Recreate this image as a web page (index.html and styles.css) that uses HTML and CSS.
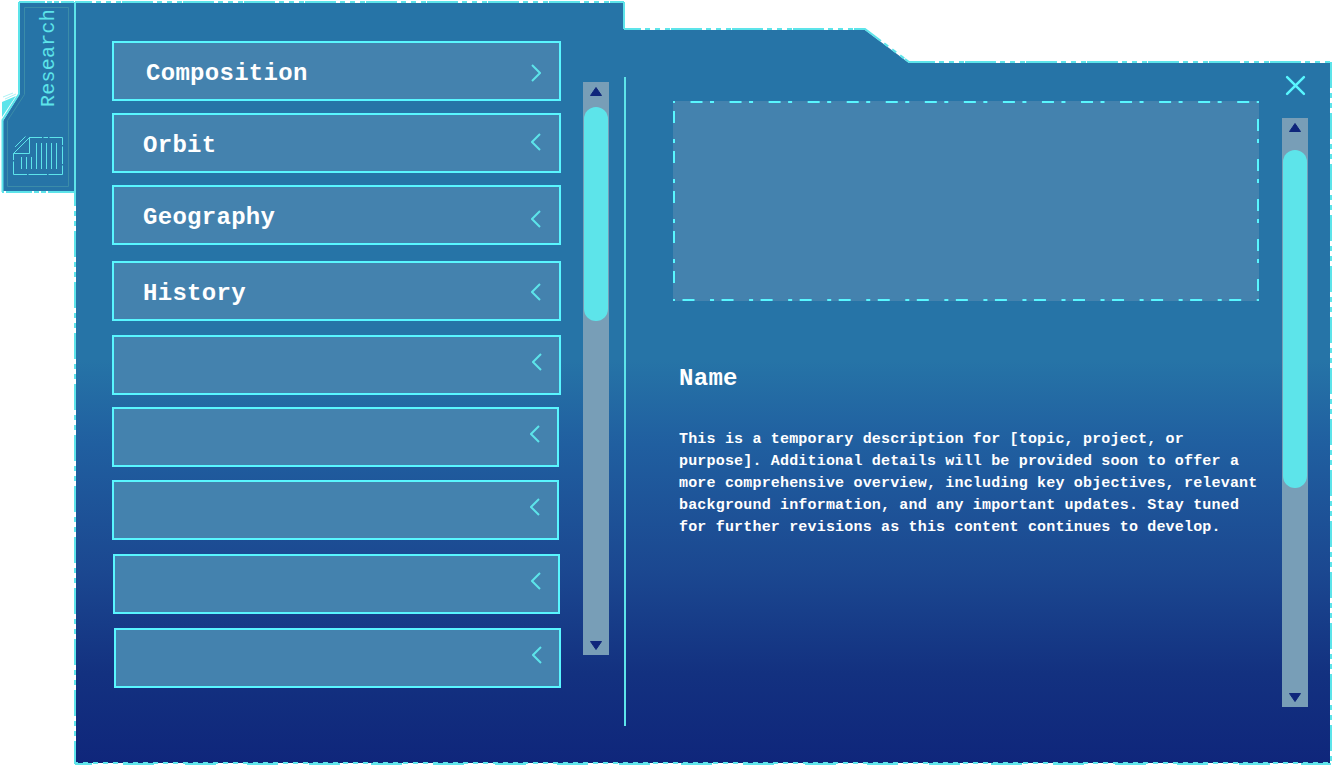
FILE: index.html
```html
<!DOCTYPE html>
<html lang="en">
<head>
<meta charset="utf-8">
<title>Research</title>
<link rel="stylesheet" href="styles.css">
</head>
<body>
<div class="screen">
  <svg class="frame" width="1333" height="765" viewBox="0 0 1333 765" aria-hidden="true">
    <defs>
      <linearGradient id="depth" gradientUnits="userSpaceOnUse" x1="704" y1="0" x2="704" y2="765">
        <stop offset="0" stop-color="#2674a7"/>
        <stop offset=".47" stop-color="#2674a7"/>
        <stop offset=".58" stop-color="#205fa0"/>
        <stop offset=".75" stop-color="#1b4790"/>
        <stop offset=".88" stop-color="#133180"/>
        <stop offset="1" stop-color="#0f267b"/>
      </linearGradient>
    </defs>
    <path class="edge-fill" d="M2 117V102L16 96Z"/>
    <path class="edge-light" d="M3 97L13 93M5 99L16 94"/>
    <path class="tab-shape" d="M19 3H74V191H3V121L19 95Z"/>
    <path class="tab-edge" d="M19 2V94L2.500 120V192"/>
    <path class="tab-dash" d="M19 2H74M74 192H2"/>
    <path class="tab-inner" d="M24.500 7.500H68.500V186.500H7.500V120.500L24.500 94.500Z"/>
    <path class="panel-shape" d="M76 3H624V30H865L909 63H1330V763H76Z"/>
    <path class="solid-edge" d="M75 2V192M624 2V29"/>
    <path class="panel-top" d="M75 2H624"/>
    <path class="panel-top" d="M624 29H865L909 62H1331"/>
    <path class="panel-dash" d="M1331 62V764"/>
    <path class="panel-dash" d="M75 180V764"/>
    <path class="base-long" d="M75 764H1331"/>
    <path class="base-short" d="M75 763H1331"/>
  </svg>

  <aside class="tab">
    <span class="tab-label">Research</span>
    <svg class="doc" width="52" height="41" viewBox="0 0 52 41" aria-hidden="true">
      <path d="M17 1.500H50.500V38.500H1.500V17.500L17.500 1.500V17.500H1.500M3 11L13.500 .5M9.500 21V33M14.500 21V33M19.500 21V33M24.500 7V33M29.500 7V33M34.500 7V33M39.500 7V33M44.500 7V33"/>
      <path class="doc-gap" d="M30 1.500H31.500M36 1.500H37.500M50.500 9V10.500M50.500 28V29.500M15 38.500H16.500M35 38.500H36.500M1.500 24V25.500"/>
    </svg>
  </aside>

  <nav class="topics">
    <button class="topic first"><span>Composition</span><svg class="arrow a1" viewBox="0 0 10 18"><path d="M1 1L9 9L1 17"/></svg></button>
    <button class="topic g12"><span>Orbit</span><svg class="arrow a2" viewBox="0 0 10 18"><path d="M9 1L1 9L9 17"/></svg></button>
    <button class="topic g12"><span>Geography</span><svg class="arrow a3" viewBox="0 0 10 18"><path d="M9 1L1 9L9 17"/></svg></button>
    <button class="topic g16"><span>History</span><svg class="arrow a4" viewBox="0 0 10 18"><path d="M9 1L1 9L9 17"/></svg></button>
    <button class="topic g14"><svg class="arrow a5" viewBox="0 0 10 18"><path d="M9 1L1 9L9 17"/></svg></button>
    <button class="topic g12 narrow"><svg class="arrow a6" viewBox="0 0 10 18"><path d="M9 1L1 9L9 17"/></svg></button>
    <button class="topic g13 narrow"><svg class="arrow a6" viewBox="0 0 10 18"><path d="M9 1L1 9L9 17"/></svg></button>
    <button class="topic g14 narrow in1"><svg class="arrow a6" viewBox="0 0 10 18"><path d="M9 1L1 9L9 17"/></svg></button>
    <button class="topic g14 narrow in2"><svg class="arrow a6" viewBox="0 0 10 18"><path d="M9 1L1 9L9 17"/></svg></button>
  </nav>

  <div class="scroll scroll-list">
    <svg class="cap" viewBox="0 0 12 9"><path d="M6 .5L11.500 8.500H.5Z"/></svg>
    <div class="thumb"></div>
    <svg class="cap end" viewBox="0 0 12 9"><path d="M6 8.500L11.500 .5H.5Z"/></svg>
  </div>

  <div class="divider"></div>

  <main class="detail">
    <svg class="media" width="586" height="200" viewBox="0 0 586 200" aria-hidden="true">
      <rect width="586" height="200" class="media-fill"/>
      <path class="media-h" d="M17.500 1H586"/>
      <path class="media-h lower" d="M9.500 199H586"/>
      <path class="media-v" d="M1 10V200"/>
      <path class="media-v right" d="M585 18V200"/>
      <path class="media-corner" d="M0 1H2M0 199H2M584 1H586M584 199H586"/>
    </svg>
    <h1 class="name">Name</h1>
    <p class="description">This is a temporary description for [topic, project, or<br>purpose]. Additional details will be provided soon to offer a<br>more comprehensive overview, including key objectives, relevant<br>background information, and any important updates. Stay tuned<br>for further revisions as this content continues to develop.</p>
  </main>

  <div class="side">
    <svg class="close" viewBox="0 0 20 20" role="img" aria-label="Close"><path d="M2 2L18 18M18 2L2 18"/></svg>
    <div class="scroll scroll-detail">
      <svg class="cap" viewBox="0 0 12 9"><path d="M6 .5L11.500 8.500H.5Z"/></svg>
      <div class="thumb"></div>
      <svg class="cap end" viewBox="0 0 12 9"><path d="M6 8.500L11.500 .5H.5Z"/></svg>
    </div>
  </div>
</div>
</body>
</html>
```
FILE: styles.css
```css
* { box-sizing: border-box; }
body { margin: 0; background: #fff; overflow: hidden; font-family: "Liberation Mono", monospace; }
.screen { position: relative; isolation: isolate; width: 1333px; height: 765px; display: flex; align-items: flex-start; }
.frame { position: absolute; inset: 0; z-index: -1; }
.frame path { fill: none; stroke: #5de4ea; stroke-width: 2; }
.frame .edge-fill { fill: #5de4ea; stroke: none; }
.frame .edge-light { stroke-width: 1; opacity: .5; }
.frame .tab-shape { fill: #2674a7; stroke: none; }
.frame .tab-dash { stroke-dasharray: 26 2 5 2 5 2; }
.frame .tab-inner { stroke: #3b8ca9; stroke-width: 1; }
.frame .panel-shape { fill: url(#depth); stroke: none; }
.frame .panel-top { stroke-dasharray: 31 4 5 5 5 5 5 1; stroke-dashoffset: 14; }
.frame .panel-dash { stroke-dasharray: 26 5 5 5 5 5; }
.frame .base-long { stroke-dasharray: 31 31; stroke-dashoffset: 14; }
.frame .base-short { stroke-dasharray: 5 5; stroke-dashoffset: 2; }

.tab { width: 75px; flex: none; display: flex; flex-direction: column; align-items: flex-start; padding: 9px 0 0 12px; }
.tab-label { writing-mode: vertical-rl; transform: rotate(180deg); margin-left: 25px; width: 24px; line-height: 24px; height: 98px; font-size: 20px; letter-spacing: .24px; color: #5de4ea; }
.doc { margin-top: 29px; fill: none; stroke: #5de4ea; stroke-width: 1; }
.doc-gap { stroke: #2674a7; stroke-width: 2; }

.topics { width: 487px; flex: none; padding: 41px 0 0 37px; display: flex; flex-direction: column; }
.topic { width: 449px; height: 60px; flex: none; margin: 0; padding: 0 17px 0 29px; border: 2px solid #59f6ff; background: #4482ae; display: flex; align-items: center; color: #fff; font: bold 24px/36px "Liberation Mono", monospace; letter-spacing: .29px; }
.topic span { padding-top: 6px; }
.first { padding-left: 32px; }
.g12 { margin-top: 12px; }
.g13 { margin-top: 13px; }
.g14 { margin-top: 14px; }
.g16 { margin-top: 16px; }
.narrow { width: 447px; }
.in1 { margin-left: 1px; }
.in2 { margin-left: 2px; }
.arrow { width: 10px; height: 18px; margin-left: auto; fill: none; stroke: #5de4ea; stroke-width: 2; }
.a1 { margin-right: 1px; margin-top: 4px; }
.a2 { margin-right: 1px; margin-bottom: 3px; }
.a3 { margin-right: 1px; margin-top: 8px; }
.a4 { margin-right: 1px; margin-top: 1px; }
.a5, .a6 { margin-bottom: 6px; }

.scroll { width: 26px; background: #789eb7; display: flex; flex-direction: column; align-items: center; padding: 5px 0; }
.scroll-list { flex: none; margin: 82px 15px 0 21px; height: 573px; }
.cap { width: 12px; height: 9px; flex: none; fill: #0f267b; stroke: #0f267b; stroke-linejoin: round; }
.end { margin-top: auto; }
.thumb { width: 24px; border-radius: 12px; background: #5de4ea; }
.scroll-list .thumb { height: 214px; margin-top: 11px; }
.divider { width: 2px; height: 649px; flex: none; margin-top: 77px; background: #5de4ea; }

.detail { width: 633px; flex: none; margin-left: 47px; padding-top: 101px; }
.media { display: block; }
.media-fill { fill: #4482ae; }
.media-h, .media-v, .media-corner { stroke: #59f6ff; stroke-width: 2; fill: none; }
.media-h { stroke-dasharray: 12 7.500 4 15.550; }
.lower { stroke-dasharray: 12 15.550 4 7.500; }
.media-v { stroke-dasharray: 12 16 4 8; }
.right { stroke-dasharray: 12 8 4 16; }
.name { margin: 60px 0 0 6px; font: bold 24px/36px "Liberation Mono", monospace; letter-spacing: .29px; color: #fff; }
.description { margin: 32px 0 0 6px; font-size: 15px; font-weight: bold; line-height: 22px; letter-spacing: .18px; color: #fff; white-space: nowrap; }

.side { width: 26px; flex: none; margin-left: -24px; padding-top: 75px; display: flex; flex-direction: column; align-items: center; }
.close { width: 21px; height: 21px; fill: none; stroke: #59f6ff; stroke-width: 2.400; stroke-linecap: round; }
.scroll-detail { margin-top: 22px; height: 589px; }
.scroll-detail .thumb { height: 338px; margin-top: 18px; }
```
